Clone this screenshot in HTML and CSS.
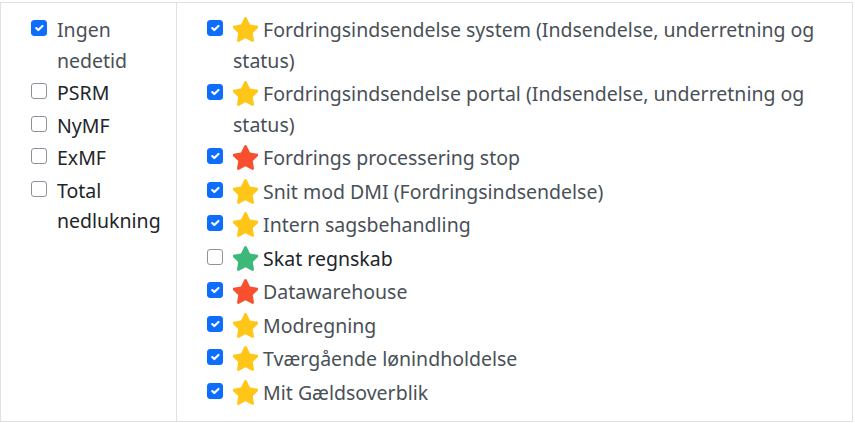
FILE: index.html
```html
<!DOCTYPE html>
<html lang="da">
<head>
<meta charset="utf-8">
<link rel="stylesheet" href="styles.css">
</head>
<body>
<svg width="0" height="0" class="defs">
  <defs>
    <path id="star" d="M12 1.6c.5 0 .9.3 1.1.7l2.7 5.6 6.1.9c.9.1 1.3 1.3.6 1.9l-4.4 4.3 1 6.1c.2.9-.8 1.6-1.6 1.2L12 19.4l-5.5 2.9c-.8.4-1.8-.3-1.6-1.2l1-6.1-4.4-4.3c-.7-.6-.3-1.8.6-1.9l6.1-.9 2.7-5.6c.2-.4.6-.7 1.1-.7z"/>
  </defs>
</svg>
<table class="grid">
  <colgroup>
    <col class="c-left">
    <col class="c-right">
  </colgroup>
  <tr>
    <td class="col-left">
      <div class="check on"><span class="box"></span><span class="label">Ingen nedetid</span></div>
      <div class="check"><span class="box"></span><span class="label">PSRM</span></div>
      <div class="check"><span class="box"></span><span class="label">NyMF</span></div>
      <div class="check"><span class="box"></span><span class="label">ExMF</span></div>
      <div class="check"><span class="box"></span><span class="label">Total nedlukning</span></div>
    </td>
    <td class="col-right">
      <div class="check on"><span class="box"></span><span class="label"><svg class="star yellow" viewBox="1.5 1.5 21 21"><use href="#star"/></svg> Fordringsindsendelse system (Indsendelse, underretning og status)</span></div>
      <div class="check on"><span class="box"></span><span class="label"><svg class="star yellow" viewBox="1.5 1.5 21 21"><use href="#star"/></svg> Fordringsindsendelse portal (Indsendelse, underretning og status)</span></div>
      <div class="check on"><span class="box"></span><span class="label"><svg class="star red" viewBox="1.5 1.5 21 21"><use href="#star"/></svg> Fordrings processering stop</span></div>
      <div class="check on"><span class="box"></span><span class="label"><svg class="star yellow" viewBox="1.5 1.5 21 21"><use href="#star"/></svg> Snit mod DMI (Fordringsindsendelse)</span></div>
      <div class="check on"><span class="box"></span><span class="label"><svg class="star yellow" viewBox="1.5 1.5 21 21"><use href="#star"/></svg> Intern sagsbehandling</span></div>
      <div class="check"><span class="box"></span><span class="label"><svg class="star green" viewBox="1.5 1.5 21 21"><use href="#star"/></svg> Skat regnskab</span></div>
      <div class="check on"><span class="box"></span><span class="label"><svg class="star red" viewBox="1.5 1.5 21 21"><use href="#star"/></svg> Datawarehouse</span></div>
      <div class="check on"><span class="box"></span><span class="label"><svg class="star yellow" viewBox="1.5 1.5 21 21"><use href="#star"/></svg> Modregning</span></div>
      <div class="check on"><span class="box"></span><span class="label"><svg class="star yellow" viewBox="1.5 1.5 21 21"><use href="#star"/></svg> Tværgående lønindholdelse</span></div>
      <div class="check on"><span class="box"></span><span class="label"><svg class="star yellow" viewBox="1.5 1.5 21 21"><use href="#star"/></svg> Mit Gældsoverblik</span></div>
    </td>
  </tr>
</table>
</body>
</html>
```
FILE: styles.css
```css
html, body {
  margin: 0;
  padding: 0;
  background: #fff;
}
body {
  font-family: "Noto Sans", "Open Sans", sans-serif;
  font-size: 19.5px;
  color: #212529;
  padding: 2px 0 0 0;
}
.defs {
  position: absolute;
  width: 0;
  height: 0;
}
.grid {
  border-collapse: collapse;
  table-layout: fixed;
  width: 853px;
  height: 420px;
}
.c-left {
  width: 176px;
}
.grid td {
  border: 1px solid #dee2e6;
  vertical-align: top;
  padding: 12px 8px 0 30px;
}
.check {
  display: flex;
  align-items: flex-start;
  line-height: 30.5px;
  margin-bottom: 2px;
}
.col-right .check {
  margin-bottom: 3px;
}
.box {
  flex: none;
  box-sizing: border-box;
  width: 16px;
  height: 16px;
  border: 1px solid #8c939b;
  border-radius: 3px;
  margin-top: 5px;
  margin-right: 10px;
  background: #fff;
}
.check.on .box {
  background: #0d6efd;
  border-color: #0d6efd;
  background-image: url("data:image/svg+xml,%3csvg xmlns='http://www.w3.org/2000/svg' viewBox='0 0 20 20'%3e%3cpath fill='none' stroke='%23fff' stroke-linecap='round' stroke-linejoin='round' stroke-width='3' d='m6 10 3 3 6-6'/%3e%3c/svg%3e");
  background-size: 100% 100%;
}
.check.on .label {
  color: #495057;
}
.star {
  width: 25px;
  height: 25px;
  vertical-align: -5px;
}
.star.yellow { fill: #ffc618; }
.star.red { fill: #f8502e; }
.star.green { fill: #3cb878; }
```
